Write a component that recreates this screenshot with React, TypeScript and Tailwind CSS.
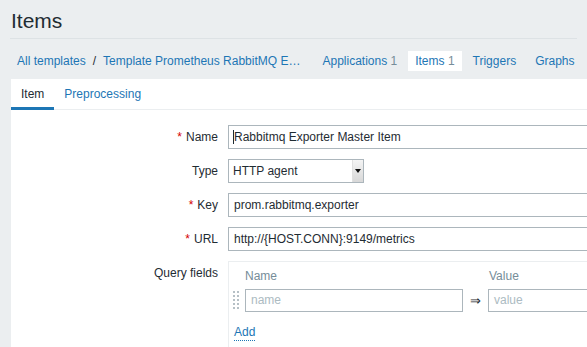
import React from "react";

const font = { fontFamily: '"Liberation Sans", Arial, sans-serif' };

function Label({ text, req, top }: { text: string; req?: boolean; top?: boolean }) {
  return (
    <div className={`text-right text-[12px] leading-[24px] text-[#1f2c33] ${top ? "self-start" : ""}`}>
      {req && <span className="text-[#d40000] mr-[4px]">*</span>}
      {text}
    </div>
  );
}

function TextInput({ value, cursor }: { value: string; cursor?: boolean }) {
  return (
    <div className="h-[24px] w-[453px] border border-[#acb6bc] bg-white pl-[5px] text-[12px] leading-[22px] text-[#1f2c33] whitespace-nowrap flex items-center">
      {cursor && <span className="inline-block w-[1px] h-[14px] bg-[#1f2c33] -ml-[1px] mr-[0px]" />}
      <span>{value}</span>
    </div>
  );
}

function DragHandle() {
  return (
    <svg width="8" height="19" viewBox="0 0 8 19">
      {[0, 4, 8, 12, 16].map((y) => (
        <g key={y}>
          <rect x="0" y={y} width="2" height="2" fill="#b6c0c6" />
          <rect x="4" y={y} width="2" height="2" fill="#b6c0c6" />
        </g>
      ))}
    </svg>
  );
}

export default function App() {
  return (
    <div className="w-[587px] h-[347px] overflow-hidden bg-[#ebeef0]" style={font}>
      {/* Title */}
      <div className="px-[10px]">
        <div className="h-[39px] border-b border-[#dde2e5] flex items-start">
          <h1 className="text-[21px] leading-[21px] pt-[10px] text-[#1f2c33] pl-[1px]">Items</h1>
        </div>
      </div>
      {/* Breadcrumb nav */}
      <div className="pt-[12px] pb-[8px] pl-[10px] flex items-center text-[12px] leading-[20px] whitespace-nowrap">
        <span className="px-[7px] text-[#1d76b5]">All templates</span>
        <span className="text-[#1f2c33] pr-[0px]">/</span>
        <span className="px-[7px] text-[#1d76b5]">Template Prometheus RabbitMQ E…</span>
        <span className="ml-[8px] px-[7px] text-[#1d76b5]">
          Applications <span className="text-[#768d99]">1</span>
        </span>
        <span className="ml-[4px] px-[7px] bg-white text-[#1d76b5]">
          Items <span className="text-[#768d99]">1</span>
        </span>
        <span className="ml-[4px] px-[7px] text-[#1d76b5]">Triggers</span>
        <span className="ml-[5px] px-[7px] text-[#1d76b5]">Graphs</span>
      </div>
      {/* Panel */}
      <div className="ml-[11px] bg-white h-[400px]">
        <div className="flex border-b border-[#ebeef0] text-[12px] h-[31px]">
          <div className="px-[10px] pt-[2px] leading-[27px] text-[#1f2c33] border-b-[3px] border-[#1d76b5] h-[31px]">Item</div>
          <div className="px-[10px] pt-[2px] leading-[27px] text-[#1d76b5]">Preprocessing</div>
        </div>
        <div className="pt-[15px] grid grid-cols-[207px_1fr] gap-x-[10px] gap-y-[10px] items-center">
          <Label text="Name" req />
          <TextInput value="Rabbitmq Exporter Master Item" cursor />

          <Label text="Type" />
          <div className="h-[24px] w-[136px] border border-[#acb6bc] bg-white flex items-stretch text-[12px] text-[#1f2c33]">
            <div className="flex-1 pl-[4px] leading-[22px]">HTTP agent</div>
            <div className="w-[11px] bg-gradient-to-b from-[#f4f4f4] to-[#d8d8d8] border-l border-[#e0e0e0] flex items-center justify-center">
              <svg width="6" height="4" viewBox="0 0 6 4">
                <path d="M0 0 H6 L3 4 Z" fill="#111" />
              </svg>
            </div>
          </div>

          <Label text="Key" req />
          <TextInput value="prom.rabbitmq.exporter" />

          <Label text="URL" req />
          <TextInput value="http://{HOST.CONN}:9149/metrics" />

          <Label text="Query fields" top />
          <div className="w-[500px] border border-[#ebeef0] pl-[4px] pt-[5px] pb-[10px]">
            <div className="grid grid-cols-[12px_218px_25px_218px] text-[12px]">
              <div />
              <div className="leading-[18px] text-[#768d99]">Name</div>
              <div />
              <div className="leading-[18px] text-[#768d99] pl-[1px]">Value</div>
              <div className="mt-[4px] flex items-center">
                <DragHandle />
              </div>
              <div className="mt-[4px] h-[23px] border border-[#acb6bc] pl-[5px] leading-[21px] text-[#acbbc2]">name</div>
              <div className="mt-[4px] flex items-center justify-center text-[#1f2c33] text-[13px]">⇒</div>
              <div className="mt-[4px] h-[23px] border border-[#acb6bc] pl-[5px] leading-[21px] text-[#acbbc2]">value</div>
            </div>
            <div className="mt-[7px] pl-[1px]">
              <span className="text-[12px] leading-[16px] text-[#1d76b5] border-b border-dotted border-[#1d76b5] inline-block">Add</span>
            </div>
          </div>
        </div>
      </div>
    </div>
  );
}
